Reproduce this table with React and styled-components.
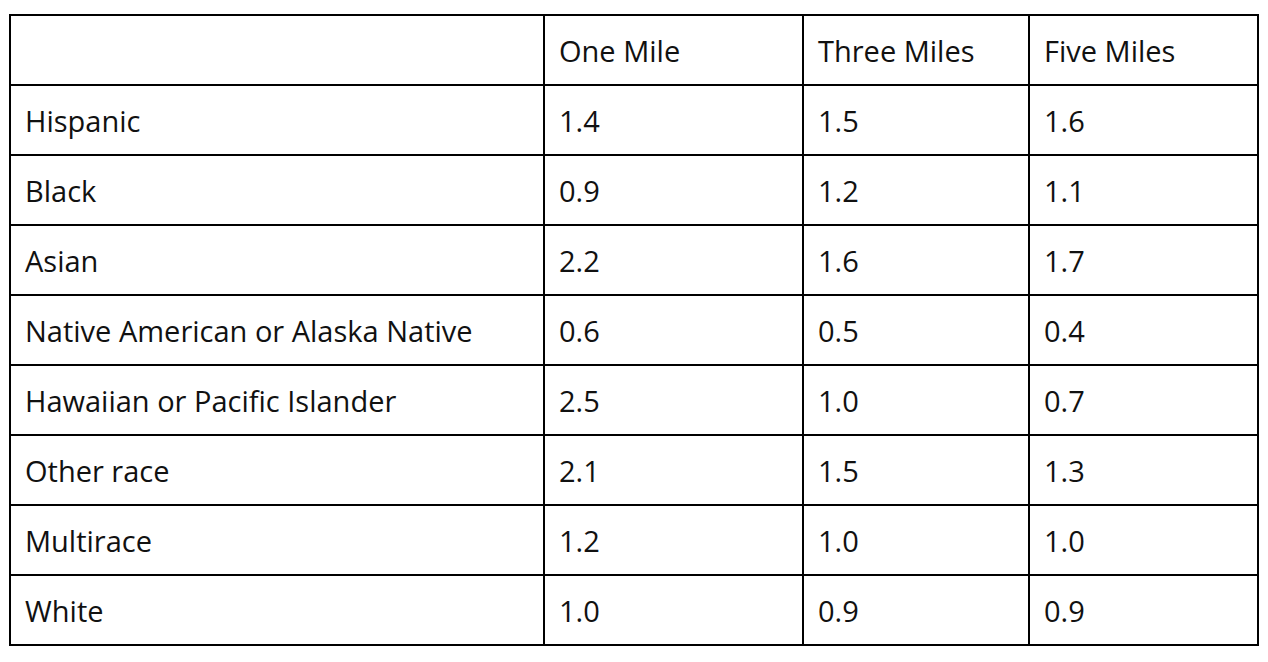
import React from "react";
import styled, { createGlobalStyle } from "styled-components";

const Global = createGlobalStyle`
  html, body { margin: 0; padding: 0; background: #fff; }
  body { font-family: "Open Sans", "Noto Sans", sans-serif; color: #111; }
`;

const Page = styled.div`
  padding: 14px 9px 0 9px;
`;

const Table = styled.table`
  border-collapse: collapse;
  width: 1250px;
  table-layout: fixed;
  font-size: 29px;
`;

const Cell = styled.td`
  border: 2px solid #000;
  height: 68px;
  padding: 0 0 0 14px;
  text-align: left;
  vertical-align: middle;
  font-weight: 400;
  white-space: nowrap;
  line-height: 1;
`;

const cols = [534, 259, 226, 229];

const headers = ["", "One Mile", "Three Miles", "Five Miles"];
const rows = [
  ["Hispanic", "1.4", "1.5", "1.6"],
  ["Black", "0.9", "1.2", "1.1"],
  ["Asian", "2.2", "1.6", "1.7"],
  ["Native American or Alaska Native", "0.6", "0.5", "0.4"],
  ["Hawaiian or Pacific Islander", "2.5", "1.0", "0.7"],
  ["Other race", "2.1", "1.5", "1.3"],
  ["Multirace", "1.2", "1.0", "1.0"],
  ["White", "1.0", "0.9", "0.9"],
];

export default function App() {
  return (
    <Page>
      <Global />
      <Table>
        <colgroup>
          {cols.map((w, i) => (
            <col key={i} style={{ width: w }} />
          ))}
        </colgroup>
        <tbody>
          <tr>
            {headers.map((h, i) => (
              <Cell key={i}>{h}</Cell>
            ))}
          </tr>
          {rows.map((r, i) => (
            <tr key={i}>
              {r.map((c, j) => (
                <Cell key={j}>{c}</Cell>
              ))}
            </tr>
          ))}
        </tbody>
      </Table>
    </Page>
  );
}
